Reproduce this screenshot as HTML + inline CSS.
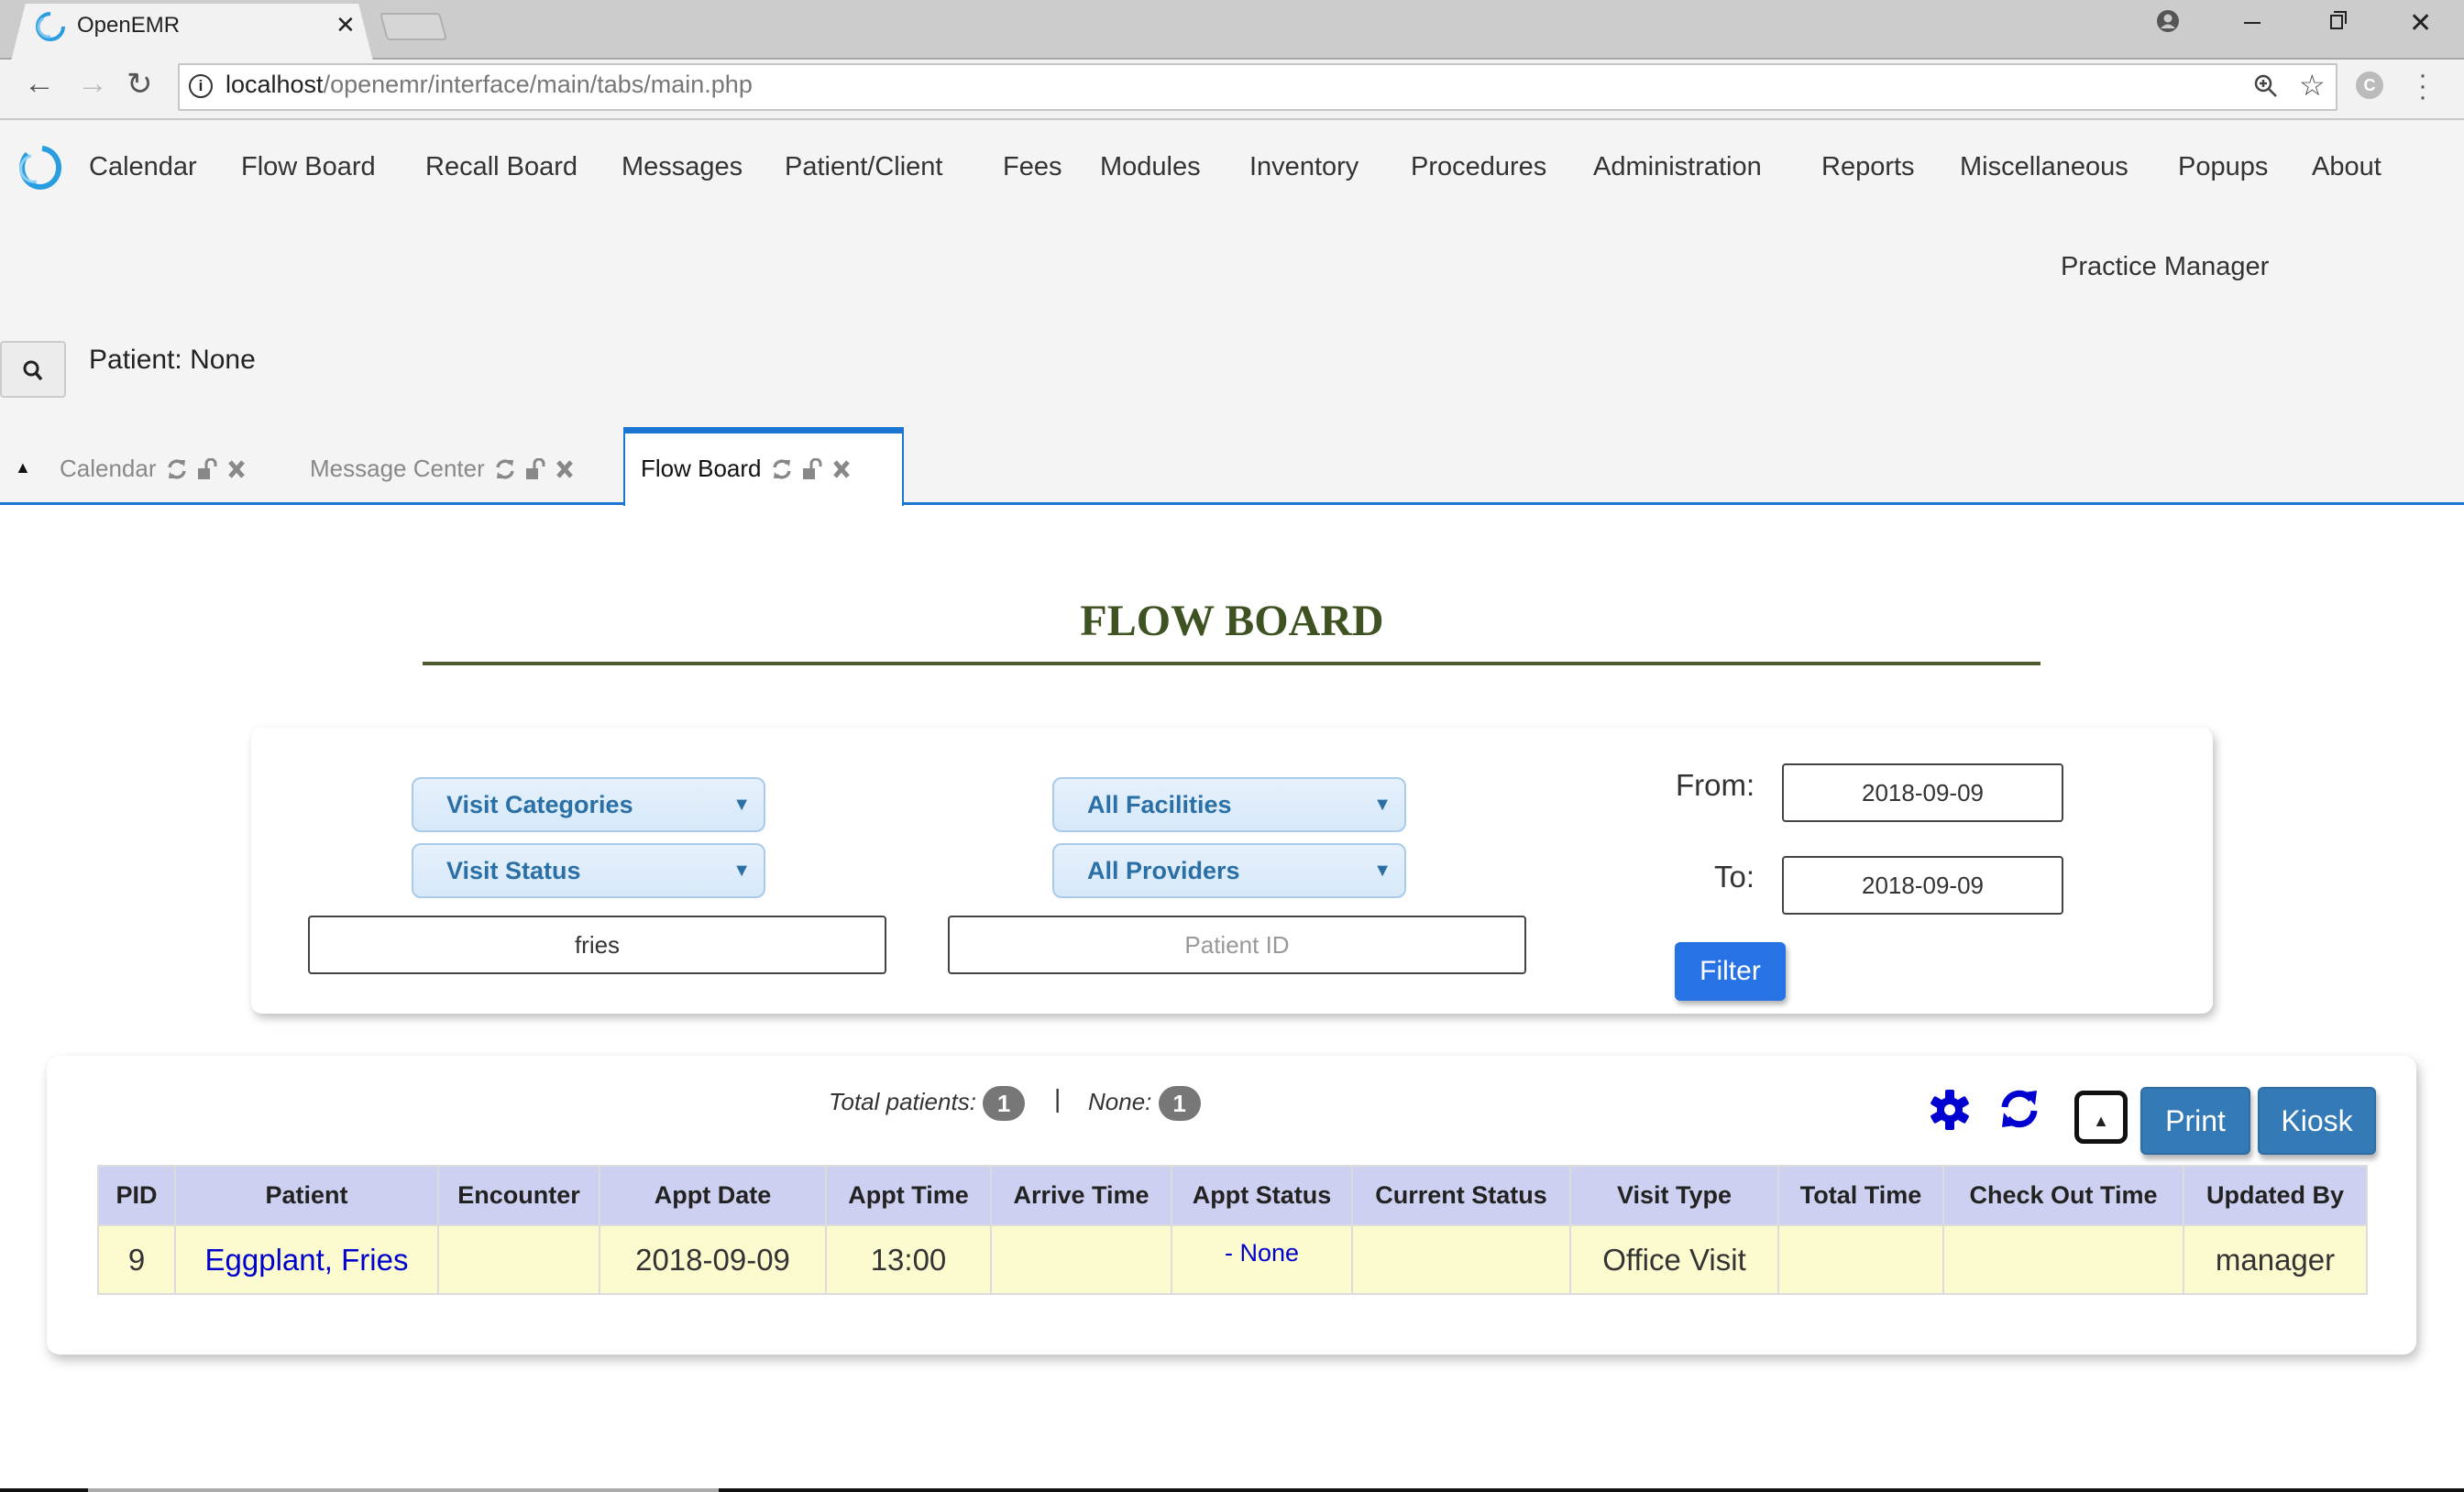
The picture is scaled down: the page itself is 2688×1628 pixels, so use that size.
<!DOCTYPE html>
<html><head><meta charset="utf-8">
<style>
*{box-sizing:border-box;margin:0;padding:0}
body{width:2688px;height:1628px;overflow:hidden;background:#fff;font-family:"Liberation Sans",sans-serif;position:relative;color:#222}
.a{position:absolute;white-space:nowrap}
.nav{font-size:29px;color:#333;top:166px}
.dd{position:absolute;height:60px;width:386px;border:2px solid #a9cbe9;border-radius:10px;background:linear-gradient(#e6f1fc,#d7e8f8);color:#2a70a6;font-weight:bold;font-size:27px;line-height:56px;padding-left:36px}
.dd span{position:absolute;right:14px;top:0;font-size:20px}
.inp{position:absolute;height:64px;border:2px solid #444;border-radius:4px;background:#fff;text-align:center;line-height:60px;font-size:26px;color:#333}
table{border-collapse:collapse;position:absolute;left:106px;top:1271px}
th,td{border:2px solid #dcdcdc;text-align:center}
th{background:#cdd0f0;height:65px;font-size:27px;color:#222}
td{background:#fcfbd0;height:75px;font-size:33px;color:#333}
.tabi{font-size:26px;color:#888;top:496px}
.ic{display:inline-block;vertical-align:-4px;margin-left:10px}
</style></head><body>
<svg width="0" height="0" style="position:absolute">
<defs>
<g id="rf"><path d="M4 10 A8 8 0 0 1 18 6" fill="none" stroke="currentColor" stroke-width="3.5"/><path d="M20 14 A8 8 0 0 1 6 18" fill="none" stroke="currentColor" stroke-width="3.5"/><path d="M14 2 L21 2 L20 9 Z M10 22 L3 22 L4 15 Z" fill="currentColor"/></g>
<g id="lk"><rect x="1" y="11" width="13" height="12" fill="currentColor"/><path d="M10 11 V6 A5 5 0 0 1 20 6 V9" fill="none" stroke="currentColor" stroke-width="3"/></g>
<g id="xx"><path d="M4 4 L18 20 M18 4 L4 20" stroke="currentColor" stroke-width="5"/></g>
</defs></svg>
<!-- chrome tab strip -->
<div class="a" style="left:0;top:0;width:2688px;height:65px;background:#cccccc;border-bottom:2px solid #a8a8a8"></div>
<div class="a" style="left:12px;top:4px;width:395px;height:63px;background:#f2f2f2;clip-path:polygon(4% 0,96% 0,100% 100%,0 100%)"></div>
<div class="a" style="left:418px;top:14px;width:66px;height:30px;border:2px solid #b0b0b0;border-radius:4px;background:#d6d6d6;transform:skewX(15deg)"></div>
<svg class="a" style="left:38px;top:12px" width="34" height="34" viewBox="0 0 34 34"><path d="M17 3 A14 14 0 1 0 31 17" fill="none" stroke="#2a9de0" stroke-width="4"/><path d="M9 8 A11 11 0 0 0 17 28" fill="none" stroke="#7cc5ef" stroke-width="3"/></svg>
<div class="a" style="left:84px;top:14px;font-size:24px;color:#222">OpenEMR</div>
<div class="a" style="left:366px;top:12px;font-size:26px;color:#222">✕</div>
<svg class="a" style="left:2352px;top:10px" width="26" height="26" viewBox="0 0 26 26"><circle cx="13" cy="13" r="12" fill="#555"/><circle cx="13" cy="10" r="4.5" fill="#ccc"/><path d="M5 21 Q13 12 21 21" fill="#ccc"/></svg>
<div class="a" style="left:2448px;top:24px;width:18px;height:2px;background:#222"></div>
<div class="a" style="left:2542px;top:16px;width:14px;height:16px;border:2px solid #222"></div>
<div class="a" style="left:2546px;top:12px;width:14px;height:14px;border-top:2px solid #222;border-right:2px solid #222"></div>
<div class="a" style="left:2628px;top:8px;font-size:30px;color:#222">✕</div>
<!-- address row -->
<div class="a" style="left:0;top:65px;width:2688px;height:66px;background:#f2f2f2;border-bottom:2px solid #c8c8c8"></div>
<div class="a" style="left:26px;top:72px;font-size:34px;color:#555">←</div>
<div class="a" style="left:84px;top:72px;font-size:34px;color:#bbb">→</div>
<div class="a" style="left:138px;top:72px;font-size:34px;color:#555">↻</div>
<div class="a" style="left:194px;top:69px;width:2356px;height:52px;background:#fff;border:2px solid #c6c6c6;border-radius:2px"></div>
<div class="a" style="left:206px;top:81px;width:26px;height:26px;border:2px solid #333;border-radius:50%;font-size:17px;text-align:center;line-height:22px;font-weight:bold">i</div>
<div class="a" style="left:246px;top:77px;font-size:27px;color:#222">localhost<span style="color:#777">/openemr/interface/main/tabs/main.php</span></div>
<svg class="a" style="left:2458px;top:80px" width="28" height="28" viewBox="0 0 28 28"><circle cx="11" cy="11" r="8" fill="none" stroke="#444" stroke-width="2.5"/><path d="M17 17 L25 25 M11 7 V15 M7 11 H15" stroke="#444" stroke-width="2.5"/></svg>
<div class="a" style="left:2508px;top:74px;font-size:32px;color:#444">☆</div>
<div class="a" style="left:2570px;top:78px;width:30px;height:30px;border-radius:50%;background:#bbb;color:#fff;font-size:18px;text-align:center;line-height:30px;font-weight:bold">C</div>
<div class="a" style="left:2638px;top:76px;font-size:30px;color:#555;line-height:12px">·<br>·<br>·</div>
<!-- app header -->
<div class="a" style="left:0;top:131px;width:2688px;height:419px;background:#f4f4f4"></div>
<svg class="a" style="left:20px;top:158px" width="48" height="50" viewBox="0 0 48 50"><path d="M26 4 A20 21 0 1 1 10 10" fill="none" stroke="#2a9de0" stroke-width="6"/><path d="M14 12 A14 14 0 0 0 20 40" fill="none" stroke="#8fd0f5" stroke-width="3"/></svg>
<div class="a nav" style="left:97px">Calendar</div>
<div class="a nav" style="left:263px">Flow Board</div>
<div class="a nav" style="left:464px">Recall Board</div>
<div class="a nav" style="left:678px">Messages</div>
<div class="a nav" style="left:856px">Patient/Client</div>
<div class="a nav" style="left:1094px">Fees</div>
<div class="a nav" style="left:1200px">Modules</div>
<div class="a nav" style="left:1363px">Inventory</div>
<div class="a nav" style="left:1539px">Procedures</div>
<div class="a nav" style="left:1738px">Administration</div>
<div class="a nav" style="left:1987px">Reports</div>
<div class="a nav" style="left:2138px">Miscellaneous</div>
<div class="a nav" style="left:2376px">Popups</div>
<div class="a nav" style="left:2522px">About</div>
<div class="a nav" style="left:2248px;top:275px">Practice Manager</div>
<div class="a" style="left:0;top:372px;width:72px;height:62px;background:#ececec;border:2px solid #ccc;border-radius:4px"></div>
<svg class="a" style="left:24px;top:392px" width="24" height="26" viewBox="0 0 24 26"><circle cx="10" cy="10" r="7" fill="none" stroke="#222" stroke-width="3"/><path d="M15 15 L21 22" stroke="#222" stroke-width="3.5"/></svg>
<div class="a" style="left:97px;top:376px;font-size:30px;color:#222">Patient: None</div>
<!-- tabs -->
<div class="a" style="left:0;top:548px;width:2688px;height:3px;background:#1a76d2"></div>
<div class="a" style="left:680px;top:466px;width:306px;height:86px;background:#fff;border:2px solid #1a76d2;border-top:7px solid #1a76d2;border-bottom:none"></div>
<div class="a" style="left:16px;top:500px;font-size:18px;color:#111">▲</div>
<div class="a tabi" style="left:65px">Calendar<svg class="ic" width="24" height="24" viewBox="0 0 24 24" style="color:#888"><use href="#rf"/></svg><svg class="ic" width="22" height="24" viewBox="0 0 22 24" style="color:#888"><use href="#lk"/></svg><svg class="ic" width="22" height="24" viewBox="0 0 22 24" style="color:#888"><use href="#xx"/></svg></div>
<div class="a tabi" style="left:338px">Message Center<svg class="ic" width="24" height="24" viewBox="0 0 24 24" style="color:#888"><use href="#rf"/></svg><svg class="ic" width="22" height="24" viewBox="0 0 22 24" style="color:#888"><use href="#lk"/></svg><svg class="ic" width="22" height="24" viewBox="0 0 22 24" style="color:#888"><use href="#xx"/></svg></div>
<div class="a tabi" style="left:699px;color:#111">Flow Board<svg class="ic" width="24" height="24" viewBox="0 0 24 24" style="color:#888"><use href="#rf"/></svg><svg class="ic" width="22" height="24" viewBox="0 0 22 24" style="color:#888"><use href="#lk"/></svg><svg class="ic" width="22" height="24" viewBox="0 0 22 24" style="color:#888"><use href="#xx"/></svg></div>
<!-- title -->
<div class="a" style="left:0;width:2688px;top:650px;text-align:center;font-family:'Liberation Serif',serif;font-weight:bold;font-size:48px;color:#3f5222">FLOW BOARD</div>
<div class="a" style="left:461px;top:722px;width:1765px;height:4px;background:#4b5a2f"></div>
<!-- filter panel -->
<div class="a" style="left:274px;top:794px;width:2140px;height:312px;background:#fff;border-radius:12px;box-shadow:3px 5px 10px rgba(0,0,0,.25)"></div>
<div class="dd" style="left:449px;top:848px">Visit Categories<span>▼</span></div>
<div class="dd" style="left:449px;top:920px">Visit Status<span>▼</span></div>
<div class="dd" style="left:1148px;top:848px">All Facilities<span>▼</span></div>
<div class="dd" style="left:1148px;top:920px">All Providers<span>▼</span></div>
<div class="inp" style="left:336px;top:999px;width:631px">fries</div>
<div class="inp" style="left:1034px;top:999px;width:631px;color:#999">Patient ID</div>
<div class="a" style="left:1828px;top:838px;font-size:33px;color:#333">From:</div>
<div class="a" style="left:1870px;top:938px;font-size:33px;color:#333">To:</div>
<div class="inp" style="left:1944px;top:833px;width:307px">2018-09-09</div>
<div class="inp" style="left:1944px;top:934px;width:307px">2018-09-09</div>
<div class="a" style="left:1827px;top:1028px;width:121px;height:64px;background:#2773e6;border-radius:6px;color:#fff;font-size:30px;text-align:center;line-height:64px;box-shadow:2px 4px 6px rgba(0,0,0,.3)">Filter</div>
<!-- bottom panel -->
<div class="a" style="left:51px;top:1152px;width:2585px;height:326px;background:#fff;border-radius:14px;box-shadow:3px 6px 12px rgba(0,0,0,.25)"></div>
<div class="a" style="left:904px;top:1185px;font-size:26px;font-style:italic;color:#333">Total patients: <span style="display:inline-block;width:46px;height:38px;border-radius:19px;background:#777;color:#fff;font-weight:bold;font-style:normal;text-align:center;line-height:38px;vertical-align:middle">1</span></div>
<div class="a" style="left:1150px;top:1183px;font-size:28px;color:#333">|</div>
<div class="a" style="left:1187px;top:1185px;font-size:26px;font-style:italic;color:#333">None: <span style="display:inline-block;width:46px;height:38px;border-radius:19px;background:#777;color:#fff;font-weight:bold;font-style:normal;text-align:center;line-height:38px;vertical-align:middle">1</span></div>
<svg class="a" style="left:2104px;top:1187px" width="46" height="48" viewBox="0 0 46 48"><g fill="#0000d0"><circle cx="23" cy="24" r="14"/><rect x="18" y="2" width="10" height="44" rx="2"/><rect x="18" y="2" width="10" height="44" rx="2" transform="rotate(60 23 24)"/><rect x="18" y="2" width="10" height="44" rx="2" transform="rotate(120 23 24)"/></g><circle cx="23" cy="24" r="6" fill="#fff"/></svg>
<svg class="a" style="left:2178px;top:1186px" width="50" height="48" viewBox="0 0 50 48"><g fill="none" stroke="#0000d0" stroke-width="7"><path d="M9 22 A16 16 0 0 1 38 14"/><path d="M41 26 A16 16 0 0 1 12 34"/></g><path d="M30 6 L44 4 L42 20 Z" fill="#0000d0"/><path d="M20 42 L6 44 L8 28 Z" fill="#0000d0"/></svg>
<div class="a" style="left:2263px;top:1190px;width:58px;height:58px;border:5px solid #111;border-radius:10px;text-align:center;font-size:18px;line-height:56px">▲</div>
<div class="a" style="left:2335px;top:1186px;width:120px;height:74px;background:#337ab7;border:2px solid #2e6da4;border-radius:6px;color:#fff;font-size:32px;text-align:center;line-height:70px;box-shadow:2px 5px 6px rgba(0,0,0,.3)">Print</div>
<div class="a" style="left:2463px;top:1186px;width:129px;height:74px;background:#337ab7;border:2px solid #2e6da4;border-radius:6px;color:#fff;font-size:32px;text-align:center;line-height:70px;box-shadow:2px 5px 6px rgba(0,0,0,.3)">Kiosk</div>
<table>
<tr><th style="width:84px">PID</th><th style="width:287px">Patient</th><th style="width:176px">Encounter</th><th style="width:247px">Appt Date</th><th style="width:180px">Appt Time</th><th style="width:197px">Arrive Time</th><th style="width:197px">Appt Status</th><th style="width:238px">Current Status</th><th style="width:227px">Visit Type</th><th style="width:180px">Total Time</th><th style="width:262px">Check Out Time</th><th style="width:200px">Updated By</th></tr>
<tr><td>9</td><td style="color:#0000cc">Eggplant, Fries</td><td></td><td>2018-09-09</td><td>13:00</td><td></td><td style="color:#0000cc;font-size:27px;vertical-align:top;padding-top:14px">- None</td><td></td><td>Office Visit</td><td></td><td></td><td>manager</td></tr>
</table>
<div class="a" style="left:0;top:1624px;width:2688px;height:4px;background:#111"></div>
<div class="a" style="left:96px;top:1624px;width:688px;height:4px;background:#aaa"></div>
</body></html>
